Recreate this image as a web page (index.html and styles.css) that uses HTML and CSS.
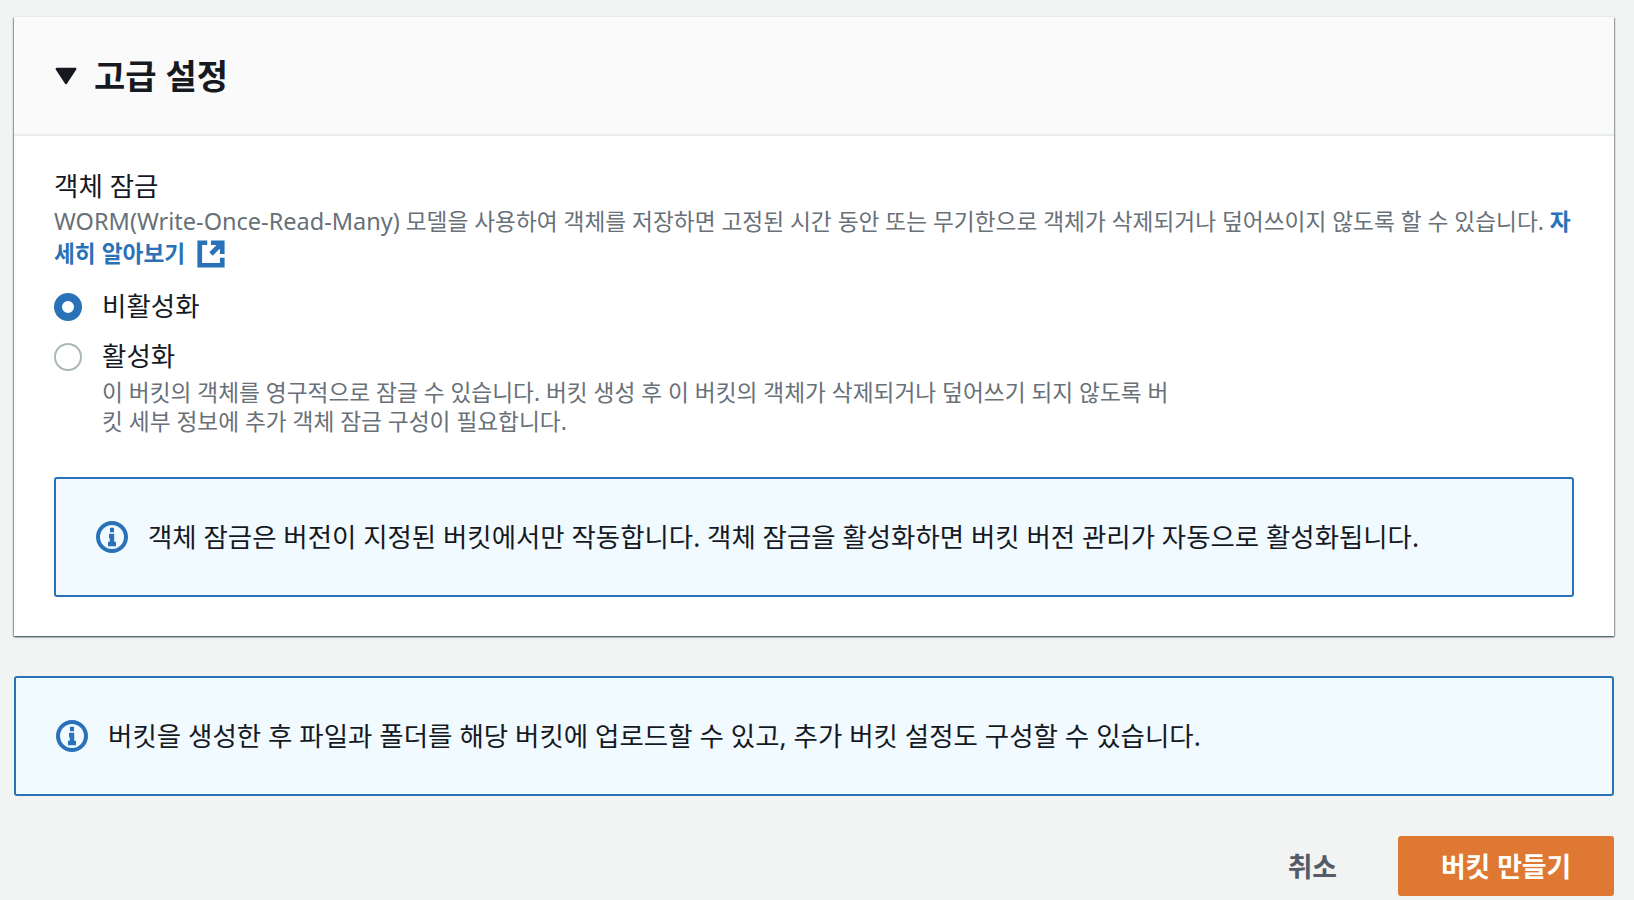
FILE: index.html
```html
<!DOCTYPE html>
<html lang="ko">
<head>
<meta charset="UTF-8">
<meta name="viewport" content="width=device-width, initial-scale=1.0">
<title>버킷 만들기</title>
<link rel="stylesheet" href="styles.css">
</head>
<body>
    <div class="card">
        <div class="card-header">
            <svg class="caret" viewBox="0 0 20 16"><path d="M1.5 1.5h17L10 14.5z"/></svg>
            <h2>고급 설정</h2>
        </div>
        <div class="card-body">
            <div class="label">객체 잠금</div>
            <div class="desc">
                <span class="latin">WORM(Write-Once-Read-Many)</span> 모델을 사용하여 객체를 저장하면 고정된 시간 동안 또는 무기한으로 객체가 삭제되거나 덮어쓰이지 않도록 할 수 있습니다. <a href="#">자<br>세히 알아보기
                <svg class="ext-icon" viewBox="0 0 16 16"><path d="M14 8V2H8M14 2 8 8M6 2H2v12h12v-4"/></svg></a>
            </div>
            <div class="radio-row first">
                <span class="radio checked"></span>
                <span class="radio-label">비활성화</span>
            </div>
            <div class="radio-row">
                <span class="radio"></span>
                <span class="radio-label">활성화</span>
            </div>
            <div class="radio-desc">이 버킷의 객체를 영구적으로 잠글 수 있습니다. 버킷 생성 후 이 버킷의 객체가 삭제되거나 덮어쓰기 되지 않도록 버<br>킷 세부 정보에 추가 객체 잠금 구성이 필요합니다.</div>
            <div class="alert inner">
                <svg class="info-icon" viewBox="0 0 16 16"><circle cx="8" cy="8" r="7"/><path class="info-i" d="M8 11.5V7.5H6.5M6 11.5h4M7 4.5h2"/></svg>
                <span class="alert-text">객체 잠금은 버전이 지정된 버킷에서만 작동합니다. 객체 잠금을 활성화하면 버킷 버전 관리가 자동으로 활성화됩니다.</span>
            </div>
        </div>
    </div>

    <div class="alert outer">
        <svg class="info-icon" viewBox="0 0 16 16"><circle cx="8" cy="8" r="7"/><path class="info-i" d="M8 11.5V7.5H6.5M6 11.5h4M7 4.5h2"/></svg>
        <span class="alert-text">버킷을 생성한 후 파일과 폴더를 해당 버킷에 업로드할 수 있고, 추가 버킷 설정도 구성할 수 있습니다.</span>
    </div>

    <div class="actions">
        <button class="cancel">취소</button>
        <button class="primary">버킷 만들기</button>
    </div>
</body>
</html>
```

FILE: styles.css
```css
body {
    font-family: "Noto Sans", "Noto Sans CJK KR", sans-serif;
    background: #f2f3f3;
    color: #16191f;
    margin: 0;
    padding: 17px 20px 0 14px;
    height: 883px;
    overflow: hidden;
}
.card {
    background: #fff;
    height: 619px;
    box-shadow: 0 1px 2px rgba(0, 28, 36, 0.55), 1px 1px 1px rgba(0, 28, 36, 0.25), -1px 1px 1px rgba(0, 28, 36, 0.25);
}
.card-header {
    display: flex;
    align-items: center;
    height: 117px;
    padding-left: 41px;
    background: #fafafa;
    border-bottom: 2px solid #eaeded;
}
.caret {
    width: 22px;
    height: 18px;
    margin-right: 17px;
    fill: #16191f;
    stroke: #16191f;
    stroke-width: 2;
    stroke-linejoin: round;
}
.card-header h2 {
    margin: 0;
    font-size: 34px;
    font-weight: 700;
    line-height: 40px;
}
.card-body {
    padding: 30px 40px 0;
}
.label {
    font-size: 26.5px;
    line-height: 40px;
}
.desc {
    font-size: 22.7px;
    line-height: 32px;
    color: #687078;
    white-space: nowrap;
    margin-top: -1px;
}
.latin {
    font-size: 23.5px;
}
.desc a {
    color: #2a72b8;
    font-weight: 700;
    text-decoration: none;
}
.ext-icon {
    width: 30px;
    height: 30px;
    margin-left: 5px;
    vertical-align: -7px;
    fill: none;
    stroke: #2a72b8;
    stroke-width: 2.5;
}
.radio-row {
    display: flex;
    align-items: center;
    height: 28px;
    margin-top: 22px;
}
.radio-row.first {
    margin-top: 23px;
}
.radio {
    width: 28px;
    height: 28px;
    box-sizing: border-box;
    border: 2px solid #aab7b8;
    border-radius: 50%;
    background: #fff;
    margin-right: 20px;
}
.radio.checked {
    border: 8px solid #2a72b8;
}
.radio-label {
    font-size: 26.5px;
    line-height: 26px;
    margin-top: -2px;
}
.radio-desc {
    margin: 7px 0 0 48px;
    font-size: 22.7px;
    line-height: 29px;
    color: #687078;
    white-space: nowrap;
}
.alert {
    display: flex;
    align-items: center;
    box-sizing: border-box;
    height: 120px;
    background: #f1faff;
    border: 2px solid #2a72b8;
    border-radius: 3px;
    font-size: 26.5px;
    white-space: nowrap;
    margin-top: 40px;
    padding-left: 40px;
    gap: 20px;
}
.alert.inner {
    margin-top: 41px;
}
.alert.inner .alert-text {
    font-size: 26.45px;
}
.alert-text {
    margin-top: -3px;
}
.info-icon {
    width: 32px;
    height: 32px;
    flex: none;
    fill: none;
    stroke: #2a72b8;
    stroke-width: 2;
}
.info-i {
    stroke-width: 2.2;
}
.actions {
    display: flex;
    justify-content: flex-end;
    align-items: center;
    margin-top: 40px;
}
.actions button {
    font-family: inherit;
    font-size: 26.8px;
    font-weight: 700;
    border: none;
    height: 60px;
    border-radius: 3px;
    cursor: pointer;
    padding: 0 0 2px;
}
.cancel {
    background: none;
    color: #545b64;
    margin-right: 61px;
}
.primary {
    background: #df7833;
    color: #fff;
    width: 216px;
}
```
